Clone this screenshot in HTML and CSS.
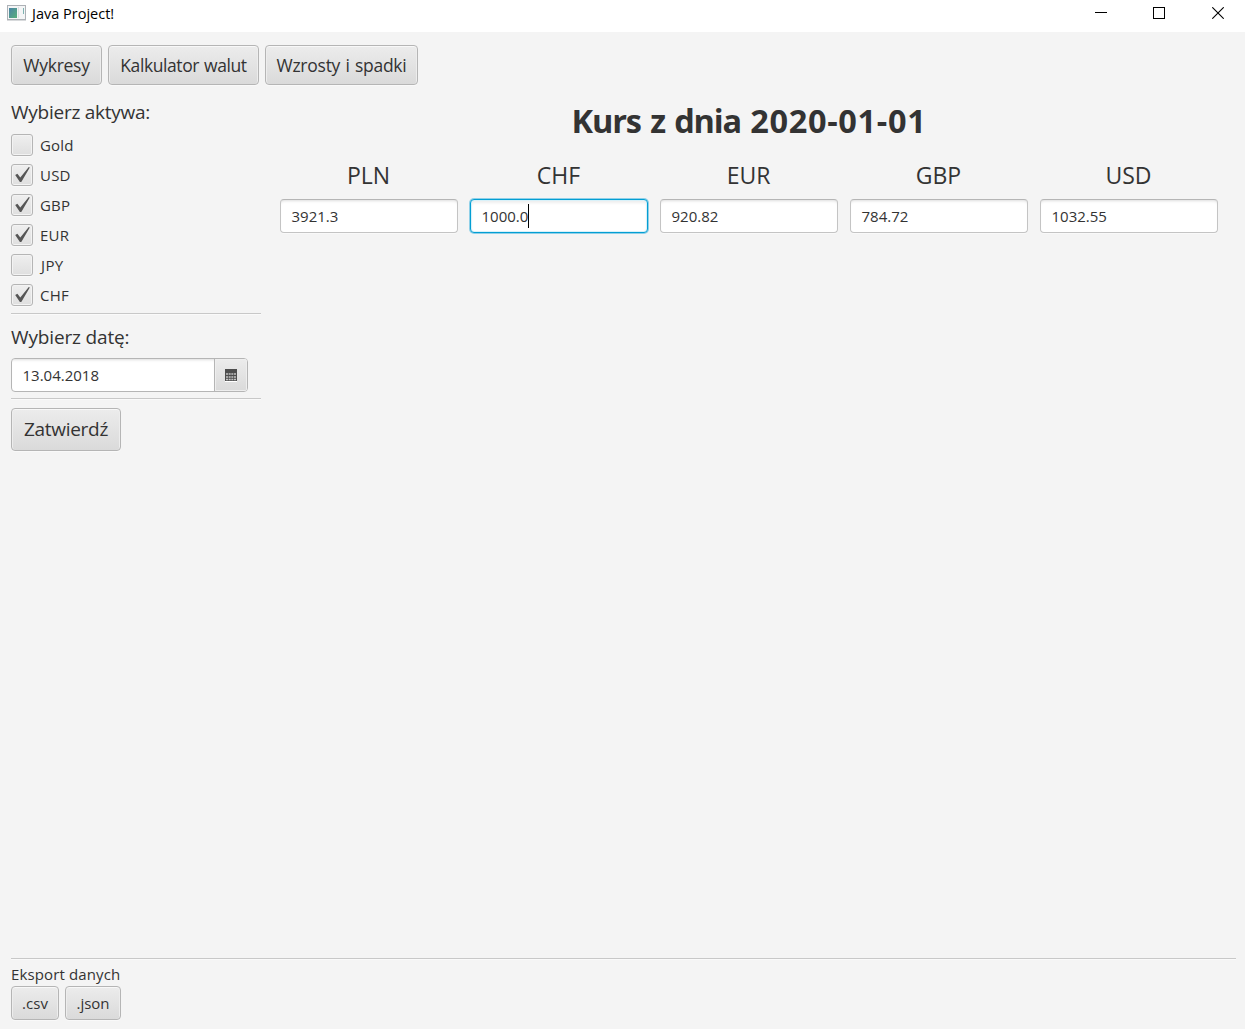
FILE: index.html
```html
<!DOCTYPE html>
<html lang="pl">
<head>
<meta charset="utf-8">
<title>Java Project!</title>
<link rel="stylesheet" href="styles.css">
</head>
<body>
<svg class="defs" width="0" height="0"><symbol id="tick" viewBox="0 0 22 22"><path d="M4.2 11 L6.4 9.8 L9.3 13.6 L17.8 3 L18.8 3.6 L10.3 18 L8.9 18 Z" fill="#565656"/></symbol></svg>
<header class="titlebar">
  <svg class="app-icon" width="20" height="18" viewBox="0 0 20 18">
    <defs><linearGradient id="pane" x1="0" y1="0" x2="1" y2="1"><stop offset="0" stop-color="#4b83a5"/><stop offset="1" stop-color="#58b07b"/></linearGradient></defs>
    <rect x=".5" y="1.5" width="18" height="14" fill="#f4f5f6" stroke="#adb1b6"/>
    <rect x="2" y="4" width="8" height="10" fill="url(#pane)"/>
    <path d="M11.5 3v11" stroke="#dcdfe1"/><path d="M16.5 4v6" stroke="#7fb3b2"/>
    <path d="M0 16.5h19" stroke="#d8dadc"/>
  </svg>
  <span class="app-title">Java Project!</span>
  <div class="window-controls">
    <svg class="minimize" width="12" height="12"><path d="M0 5.5h12" stroke="#000"/></svg>
    <svg width="12" height="12"><rect x=".5" y=".5" width="11" height="11" fill="none" stroke="#000"/></svg>
    <svg width="12" height="12"><path d="M.3.3l11.4 11.4M11.7.3L.3 11.7" stroke="#000" stroke-width="1.1"/></svg>
  </div>
</header>
<nav class="toolbar">
  <button class="btn tab tab-charts">Wykresy</button>
  <button class="btn tab tab-calc">Kalkulator walut</button>
  <button class="btn tab tab-changes">Wzrosty i spadki</button>
</nav>
<main class="content">
  <aside class="sidebar">
    <h2 class="label">Wybierz aktywa:</h2>
    <div class="assets">
      <label class="asset"><span class="box"></span><span>Gold</span></label>
      <label class="asset"><span class="box"><svg><use href="#tick"/></svg></span><span>USD</span></label>
      <label class="asset"><span class="box"><svg><use href="#tick"/></svg></span><span>GBP</span></label>
      <label class="asset"><span class="box"><svg><use href="#tick"/></svg></span><span>EUR</span></label>
      <label class="asset"><span class="box"></span><span class="jpy">JPY</span></label>
      <label class="asset"><span class="box"><svg><use href="#tick"/></svg></span><span>CHF</span></label>
    </div>
    <div class="separator"></div>
    <h2 class="label label-date">Wybierz datę:</h2>
    <div class="datepicker">
      <div class="date-text">13.04.2018</div>
      <div class="date-button">
        <svg width="12" height="13"><rect y="12" width="12" height="1" fill="#fff"/><rect width="12" height="12" fill="#4e4e4e"/><path d="M1 5h10M1 8h10M1 10.5h10" stroke="#c4c4c4" stroke-width="1.4" stroke-dasharray="2 .67"/></svg>
      </div>
    </div>
    <div class="separator separator-date"></div>
    <button class="btn submit">Zatwierdź</button>
  </aside>
  <section class="rates">
    <h1 class="heading">Kurs z dnia <span class="heading-date">2020-01-01</span></h1>
    <div class="currencies">
      <div class="currency"><div class="code">PLN</div><div class="field">3921.3</div></div>
      <div class="currency"><div class="code">CHF</div><div class="field focused">1000.0<span class="caret"></span></div></div>
      <div class="currency"><div class="code">EUR</div><div class="field">920.82</div></div>
      <div class="currency"><div class="code">GBP</div><div class="field">784.72</div></div>
      <div class="currency"><div class="code">USD</div><div class="field">1032.55</div></div>
    </div>
  </section>
</main>
<footer class="export">
  <div class="export-label">Eksport danych</div>
  <div class="export-buttons"><button class="btn csv">.csv</button><button class="btn json">.json</button></div>
</footer>
</body>
</html>
```

FILE: styles.css
```css
* { box-sizing: border-box; }
body {
  margin: 0;
  height: 1029px;
  display: flex;
  flex-direction: column;
  overflow: hidden;
  background: #f4f4f4;
  color: #333;
  font: 15px/20px "Open Sans", "Noto Sans", sans-serif;
  white-space: nowrap;
}
h1, h2 { margin: 0; font-weight: 400; }
svg { display: block; }
.defs { position: absolute; }
.titlebar {
  flex: none;
  height: 32px;
  padding: 0 21px 6px 7px;
  display: flex;
  align-items: center;
  background: #fff;
  color: #000;
}
.app-title { margin-left: 5px; font-size: 14.5px; letter-spacing: 0; padding-top: 1px; }
.window-controls { margin-left: auto; display: flex; gap: 47px; }
.minimize { margin-right: -1px; }
.btn {
  padding: 0;
  border: 1px solid #b5b5b5;
  border-radius: 4px;
  background: linear-gradient(#ececec, #dadada);
  box-shadow: inset 0 1px #f8f8f8, inset 1px 0 #ededed, inset -1px 0 #ededed, 0 1px #f9f9f9;
  color: #333;
  font: inherit;
  text-align: center;
  flex: none;
}
.toolbar { flex: none; display: flex; gap: 6px; padding: 13px 11px 0; }
.tab { height: 40px; font-size: 17.5px; letter-spacing: -0.25px; padding-bottom: 1px; word-spacing: 1px; }
.tab-charts { width: 91px; }
.tab-calc { width: 151px; letter-spacing: -0.42px; }
.tab-changes { width: 153px; }
.content { flex: 1; display: flex; padding: 12px 27px 0 11px; }
.sidebar { width: 250px; flex: none; }
.label { font-size: 19px; line-height: 30px; letter-spacing: -0.25px; }
.assets { display: grid; gap: 8px; margin-top: 7px; }
.asset { display: flex; align-items: center; gap: 7px; height: 22px; letter-spacing: 0.2px; }
.jpy { padding-left: 1px; letter-spacing: 0.4px; }
.box {
  width: 22px;
  height: 22px;
  border: 1px solid #b5b5b5;
  border-radius: 3px;
  background: linear-gradient(#efefef, #dfdfdf);
  box-shadow: inset 0 0 0 1px #f3f3f3, 0 1px #f9f9f9;
}
.box svg { width: 22px; height: 22px; margin: -1px; }
.separator { height: 2px; border-top: 1px solid #c8c8c8; background: #fafafa; margin-top: 7px; }
.label-date { margin-top: 7px; letter-spacing: -0.15px; }
.datepicker {
  width: 237px;
  height: 34px;
  margin-top: 6px;
  display: flex;
  border: 1px solid #b5b5b5;
  border-radius: 4px;
  background: #fff;
  overflow: hidden;
}
.date-text { flex: 1; padding: 6px 10.5px; box-shadow: inset 0 3px 3px -2px #ddd; }
.date-button {
  width: 33px;
  padding: 1px 1px 0 0;
  display: grid;
  place-items: center;
  border-left: 1px solid #b5b5b5;
  background: linear-gradient(#ececec, #dadada);
  box-shadow: inset 0 0 0 1px #eee;
}
.separator-date { margin-top: 6px; }
.submit { width: 110px; height: 43px; margin-top: 8px; padding-bottom: 2px; font-size: 19px; letter-spacing: -0.3px; }
.rates { flex: 1; padding-left: 19px; }
.heading { margin-top: 4px; font-size: 32.5px; line-height: 40px; font-weight: 700; letter-spacing: -1.15px; word-spacing: 2px; text-align: center; }
.heading-date { letter-spacing: 0.65px; }
.currencies { display: grid; grid-template-columns: repeat(5, 178px); column-gap: 12px; margin-top: 19px; }
.code { height: 39px; padding-right: 1px; line-height: 30px; font-size: 23px; text-align: center; }
.field {
  display: flex;
  align-items: center;
  height: 34px;
  padding-left: 10.5px;
  border: 1px solid #c4c4c4;
  border-top-color: #b5b5b5;
  border-radius: 4px;
  background: #fff;
  box-shadow: inset 0 3px 3px -2px #ddd, 0 1px #f9f9f9;
}
.focused { border-color: #039ed3; box-shadow: inset 0 0 0 1px #d9f1f9, inset 0 3px 3px #eee, 0 0 0 1px #8fd0e8; }
.caret { width: 1px; height: 24px; margin-left: -0.5px; background: #000; }
.export { flex: none; margin: 0 9px 9px 11px; border-top: 1px solid #c8c8c8; box-shadow: inset 0 1px #fafafa; }
.export-label { height: 27px; padding-top: 5px; letter-spacing: 0.13px; }
.export-buttons { display: flex; gap: 6px; }
.export .btn { height: 34px; }
.csv { width: 48px; }
.json { width: 56px; }
```
